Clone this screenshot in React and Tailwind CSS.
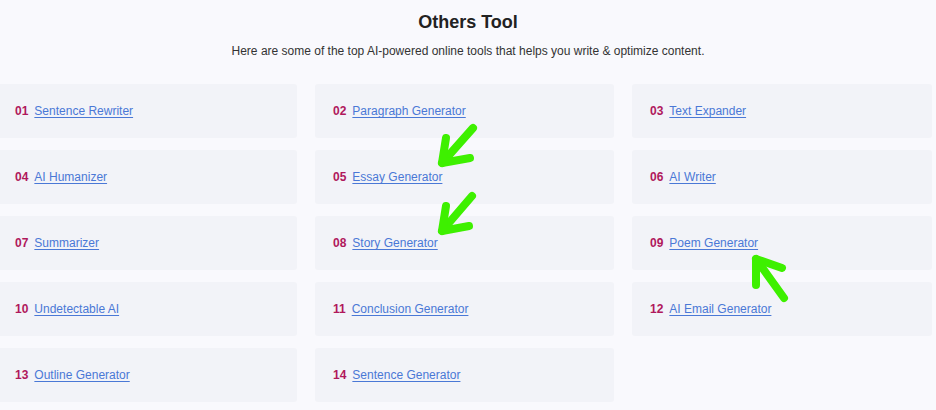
const tools = [
  'Sentence Rewriter',
  'Paragraph Generator',
  'Text Expander',
  'AI Humanizer',
  'Essay Generator',
  'AI Writer',
  'Summarizer',
  'Story Generator',
  'Poem Generator',
  'Undetectable AI',
  'Conclusion Generator',
  'AI Email Generator',
  'Outline Generator',
  'Sentence Generator',
];

function Arrow({ tail, tip, a, b }) {
  return (
    <g>
      <line x1={tail[0]} y1={tail[1]} x2={tip[0]} y2={tip[1]} />
      <polyline points={`${a[0]},${a[1]} ${tip[0]},${tip[1]} ${b[0]},${b[1]}`} />
    </g>
  );
}

export default function App() {
  return (
    <div
      className="relative w-[936px] h-[410px] overflow-hidden bg-[#f9f9fd]"
      style={{ fontFamily: '"Liberation Sans", Arial, sans-serif' }}
    >
      <div className="pt-[11px] text-center">
        <h2 className="text-[18px] leading-[22px] font-bold text-[#222]">Others Tool</h2>
        <p className="mt-[11px] text-[12px] leading-[15px] text-[#333]">
          Here are some of the top AI-powered online tools that helps you write &amp; optimize content.
        </p>
      </div>

      <div className="mt-[25px] -ml-[3px] grid grid-cols-[300px_299px_300px] gap-x-[18px] gap-y-[12px]">
        {tools.map((name, i) => (
          <div
            key={name}
            className="h-[54px] rounded-[3px] bg-[#f2f3f8] flex items-center pl-[18px] text-[12px]"
          >
            <span className="font-bold text-[#b0185c] mr-[6px]">
              {String(i + 1).padStart(2, '0')}
            </span>
            <a href="#" className="text-[#4a78d6] underline underline-offset-2">
              {name}
            </a>
          </div>
        ))}
      </div>

      <svg
        className="absolute inset-0 pointer-events-none"
        width="936"
        height="410"
        fill="none"
        stroke="#3ef000"
        strokeWidth="8"
        strokeLinecap="round"
        strokeLinejoin="round"
      >
        <Arrow tail={[473, 128]} tip={[442, 163]} a={[446, 138]} b={[470, 158]} />
        <Arrow tail={[472, 196]} tip={[442, 231]} a={[446, 206]} b={[469, 226]} />
        <Arrow tail={[784, 298]} tip={[756, 259]} a={[756, 285]} b={[782, 268]} />
      </svg>
    </div>
  );
}
